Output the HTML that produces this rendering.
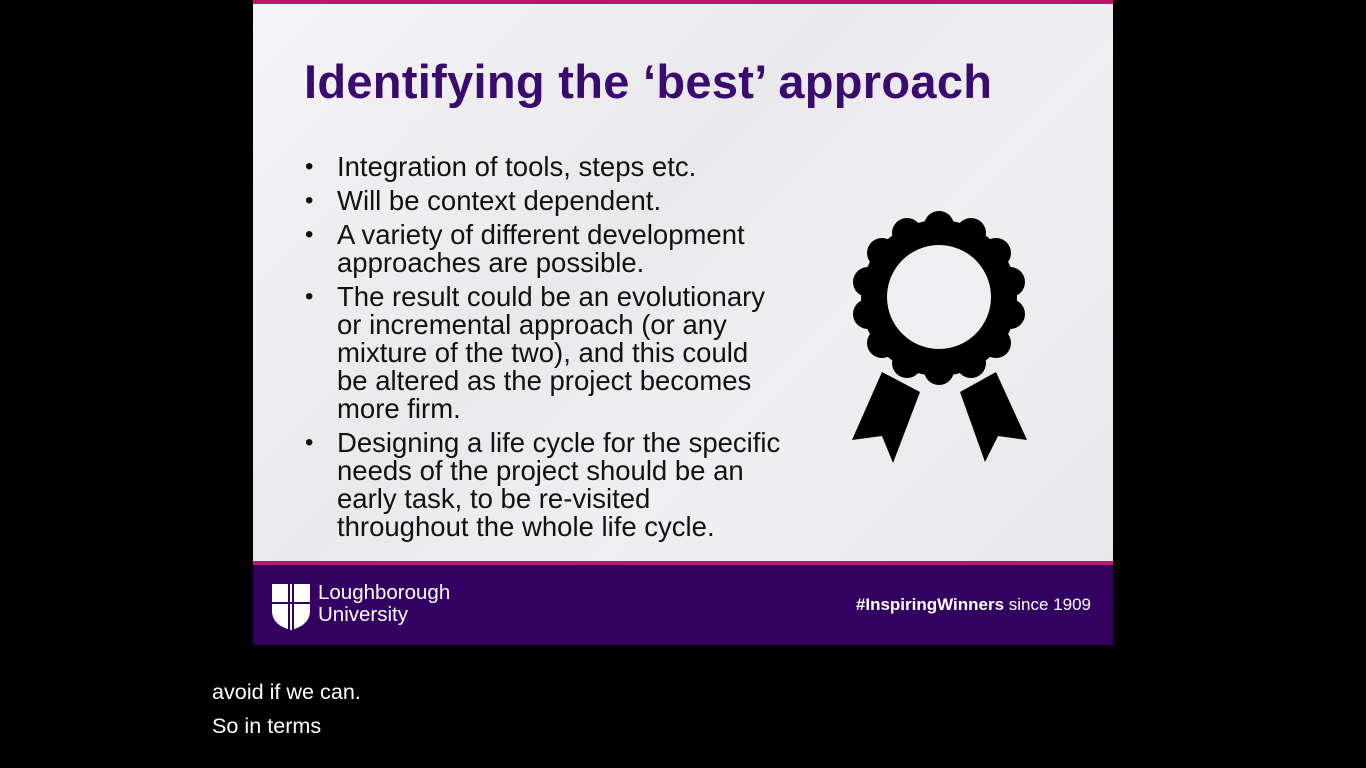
<!DOCTYPE html>
<html><head><style>
body{margin:0;width:1366px;height:768px;background:#000;position:relative;overflow:hidden;font-family:"Liberation Sans",sans-serif}
.slide{position:absolute;left:253px;top:0;width:860px;height:645px;background:linear-gradient(135deg,#f4f4f6 0%,#e9e9ec 40%,#efeff2 60%,#e6e6e9 100%);overflow:hidden}
.top{position:absolute;left:0;top:0;width:860px;height:4px;background:#c0156a}
.title{position:absolute;left:51px;top:54px;font-size:47px;font-weight:bold;color:#3b0a6e;white-space:nowrap;letter-spacing:0.3px}
ul{position:absolute;left:52px;top:153px;margin:0;padding:0;list-style:none;font-size:27.5px;line-height:28px;color:#111;width:520px}
li{position:relative;padding-left:32px;margin-bottom:6px;white-space:nowrap}
li:before{content:"•";position:absolute;left:0;font-size:24px}
.foot{position:absolute;left:0;top:561px;width:860px;height:84px;background:#320060;border-top:4px solid #c0156a;box-sizing:border-box}
.lu{position:absolute;left:65px;top:17px;color:#fff;font-size:20.5px;line-height:22px}
.tag{position:absolute;right:22px;top:30px;color:#fff;font-size:17px}
.cap{position:absolute;left:212px;color:#fff;font-size:21.6px}
</style></head><body>
<div class="slide">
<div class="top"></div>
<div class="title">Identifying the ‘best’ approach</div>
<ul>
<li>Integration of tools, steps etc.</li>
<li>Will be context dependent.</li>
<li>A variety of different development<br>approaches are possible.</li>
<li>The result could be an evolutionary<br>or incremental approach (or any<br>mixture of the two), and this could<br>be altered as the project becomes<br>more firm.</li>
<li>Designing a life cycle for the specific<br>needs of the project should be an<br>early task, to be re-visited<br>throughout the whole life cycle.</li>
</ul>
<svg style="position:absolute;left:587px;top:200px" width="200" height="270" viewBox="840 200 200 270">
<g fill="#000">
<polygon points="882,372 920,392 893,463 882,436 852,440"/>
<polygon points="960,392 996,372 1027,440 998,436 985,462"/>
</g>
<g fill="#000">
<circle cx="939" cy="298" r="78"/>
<circle cx="939" cy="226" r="15"/><circle cx="971" cy="233" r="15"/><circle cx="996" cy="253" r="15"/><circle cx="1010" cy="282" r="15"/><circle cx="1010" cy="314" r="15"/><circle cx="996" cy="343" r="15"/><circle cx="971" cy="363" r="15"/><circle cx="939" cy="370" r="15"/><circle cx="907" cy="363" r="15"/><circle cx="882" cy="343" r="15"/><circle cx="868" cy="314" r="15"/><circle cx="868" cy="282" r="15"/><circle cx="882" cy="253" r="15"/><circle cx="907" cy="233" r="15"/>
</g>
<circle cx="939" cy="297" r="52" fill="#efeff1"/>
</svg>
<div class="foot">
<svg style="position:absolute;left:18px;top:18px" width="40" height="48" viewBox="0 0 40 48"><path d="M1 1H39V28C39 40 28 45 20 47C12 45 1 40 1 28Z" fill="#fff"/><path d="M18 1V47M22 1V47M1 20H39" stroke="#320060" stroke-width="2"/></svg>
<div class="lu">Loughborough<br>University</div>
<div class="tag"><b>#InspiringWinners</b> since 1909</div>
</div>
</div>
<div class="cap" style="top:679px">avoid if we can.</div>
<div class="cap" style="top:713px">So in terms</div>
</body></html>
